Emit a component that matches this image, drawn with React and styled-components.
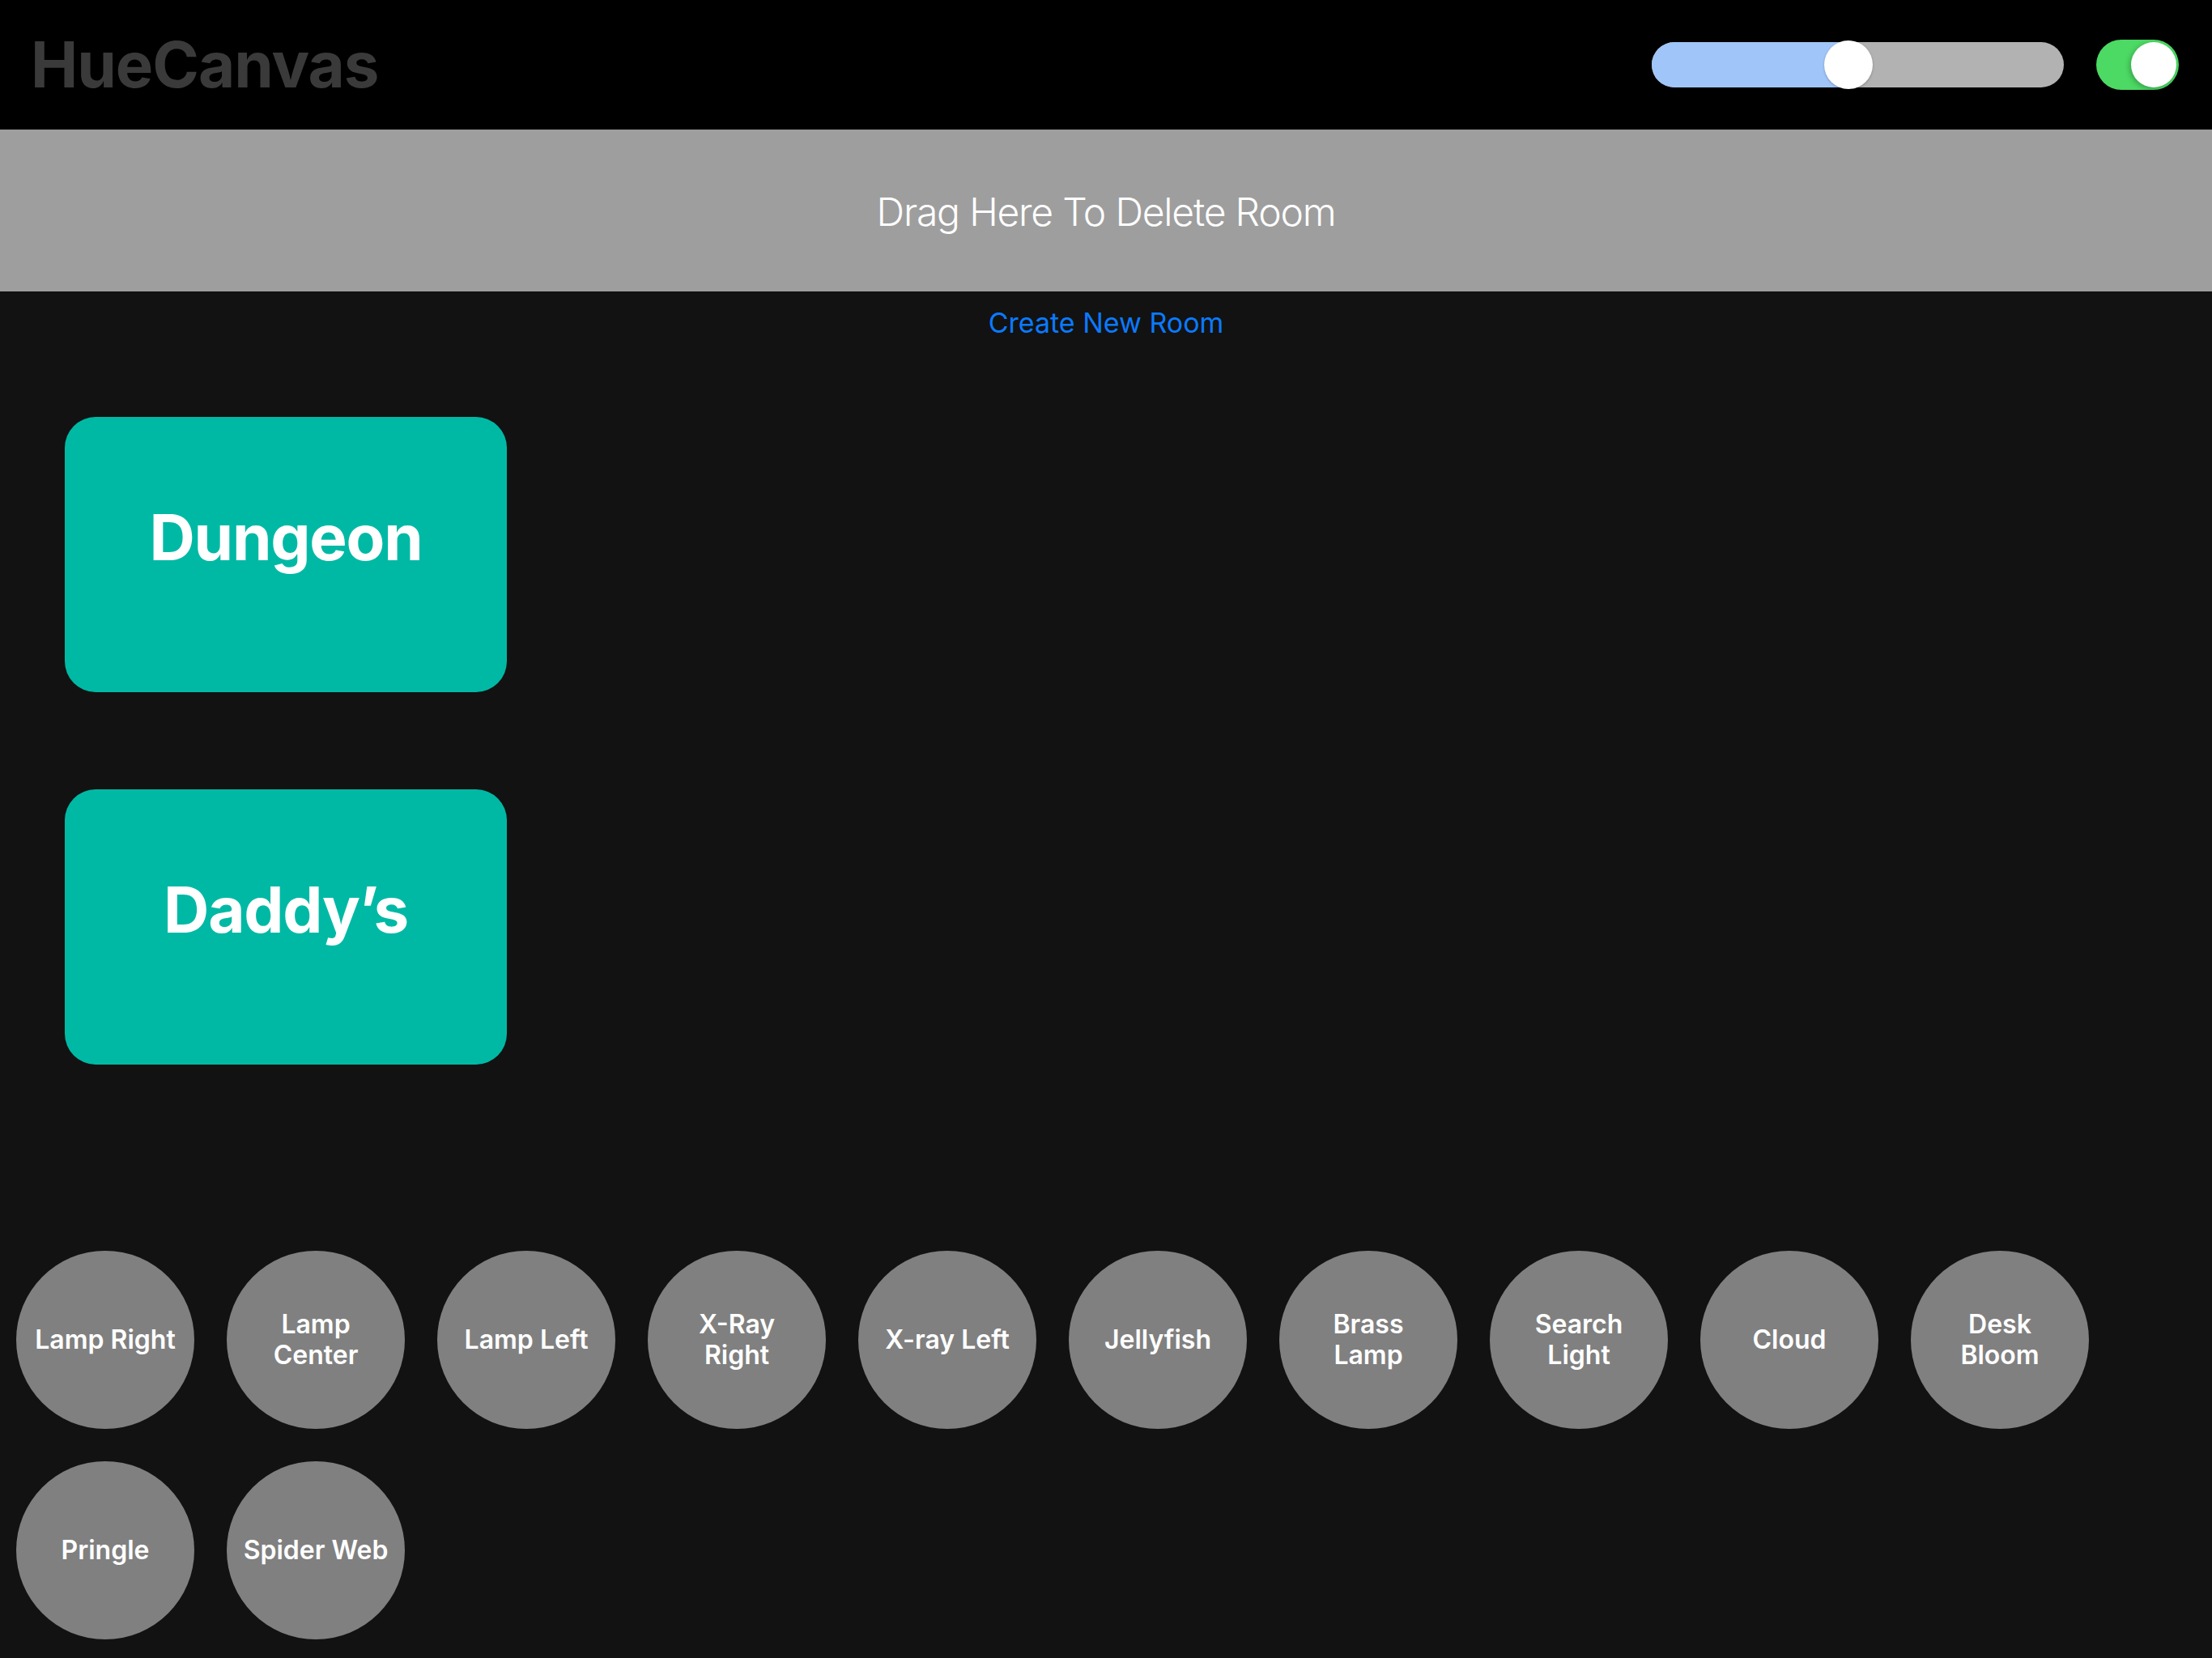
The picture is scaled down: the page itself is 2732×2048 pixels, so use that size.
import React from 'react'
import styled, { createGlobalStyle } from 'styled-components'

const GlobalStyle = createGlobalStyle`
  html, body {
    margin: 0;
    padding: 0;
    background: #121212;
  }
  body {
    font-family: Inter, "Noto Sans", "Liberation Sans", sans-serif;
  }
`

const rooms = ['Dungeon', 'Daddy’s']

const lights = [
  ['Lamp Right'],
  ['Lamp', 'Center'],
  ['Lamp Left'],
  ['X-Ray', 'Right'],
  ['X-ray Left'],
  ['Jellyfish'],
  ['Brass', 'Lamp'],
  ['Search', 'Light'],
  ['Cloud'],
  ['Desk', 'Bloom'],
  ['Pringle'],
  ['Spider Web'],
]

const Page = styled.div`
  width: 2732px;
  min-height: 2048px;
  background: #121212;
  display: flex;
  flex-direction: column;
`

const Header = styled.header`
  height: 160px;
  background: #000;
  display: flex;
  align-items: center;
  justify-content: space-between;
  padding: 0 41px 0 38px;
  box-sizing: border-box;
`

const Title = styled.h1`
  margin: 0;
  font-size: 78px;
  line-height: 94px;
  font-weight: 700;
  letter-spacing: -1px;
  color: #3a3a3a;
`

const Controls = styled.div`
  display: flex;
  align-items: center;
  gap: 40px;
`

const Track = styled.div`
  position: relative;
  width: 509px;
  height: 56px;
  border-radius: 28px;
  background: #b2b2b2;
`

const Fill = styled.div`
  position: absolute;
  left: 0;
  top: 0;
  bottom: 0;
  border-radius: 28px 0 0 28px;
  background: #a0c5f8;
`

const Thumb = styled.div`
  position: absolute;
  top: -2px;
  width: 60px;
  height: 60px;
  margin-left: -30px;
  border-radius: 50%;
  background: #fff;
  box-shadow: 0 1px 3px rgba(0, 0, 0, 0.25);
`

const Switch = styled.div`
  position: relative;
  width: 102px;
  height: 62px;
  border-radius: 31px;
  background: ${p => (p.$on ? '#4cd964' : '#3a3a3c')};
`

const Knob = styled.div`
  position: absolute;
  top: 3px;
  left: ${p => (p.$on ? '43px' : '3px')};
  width: 56px;
  height: 56px;
  border-radius: 50%;
  background: #fff;
  box-shadow: -2px 2px 6px rgba(0, 0, 0, 0.25);
`

const DeleteBar = styled.div`
  height: 200px;
  background: #9e9e9e;
  display: flex;
  align-items: center;
  justify-content: center;
  color: #fff;
  font-size: 48px;
  font-weight: 300;
  letter-spacing: -1.2px;
  padding-top: 2px;
  box-sizing: border-box;
`

const CreateLink = styled.a`
  align-self: center;
  margin-top: 18px;
  font-size: 34px;
  line-height: 42px;
  color: #0a7aff;
  text-decoration: none;
  cursor: pointer;
`

const RoomList = styled.div`
  display: flex;
  flex-direction: column;
  gap: 120px;
  margin: 95px 0 0 80px;
`

const RoomCard = styled.div`
  width: 546px;
  height: 340px;
  border-radius: 38px;
  background: #00b9a5;
  box-sizing: border-box;
  padding-top: 102px;
  text-align: center;
  color: #fff;
  font-size: 78px;
  line-height: 94px;
  font-weight: 700;
  letter-spacing: -1.2px;
`

const LightGrid = styled.div`
  display: flex;
  flex-wrap: wrap;
  gap: 40px;
  margin-top: 230px;
  padding: 0 20px 24px;
`

const LightBubble = styled.div`
  width: 220px;
  height: 220px;
  border-radius: 50%;
  background: #808080;
  display: flex;
  flex-direction: column;
  align-items: center;
  justify-content: center;
  color: #fff;
  font-size: 32px;
  line-height: 38px;
  font-weight: 600;
  text-align: center;
  white-space: nowrap;
`

const Slider = ({ value }) => (
  <Track>
    <Fill style={{ width: `${value * 100}%` }} />
    <Thumb style={{ left: `${value * 100}%` }} />
  </Track>
)

export default function App() {
  return (
    <Page>
      <GlobalStyle />
      <Header>
        <Title>HueCanvas</Title>
        <Controls>
          <Slider value={0.478} />
          <Switch $on>
            <Knob $on />
          </Switch>
        </Controls>
      </Header>
      <DeleteBar>Drag Here To Delete Room</DeleteBar>
      <CreateLink>Create New Room</CreateLink>
      <RoomList>
        {rooms.map(r => (
          <RoomCard key={r}>{r}</RoomCard>
        ))}
      </RoomList>
      <LightGrid>
        {lights.map(lines => (
          <LightBubble key={lines.join(' ')}>
            {lines.map(l => (
              <span key={l}>{l}</span>
            ))}
          </LightBubble>
        ))}
      </LightGrid>
    </Page>
  )
}
